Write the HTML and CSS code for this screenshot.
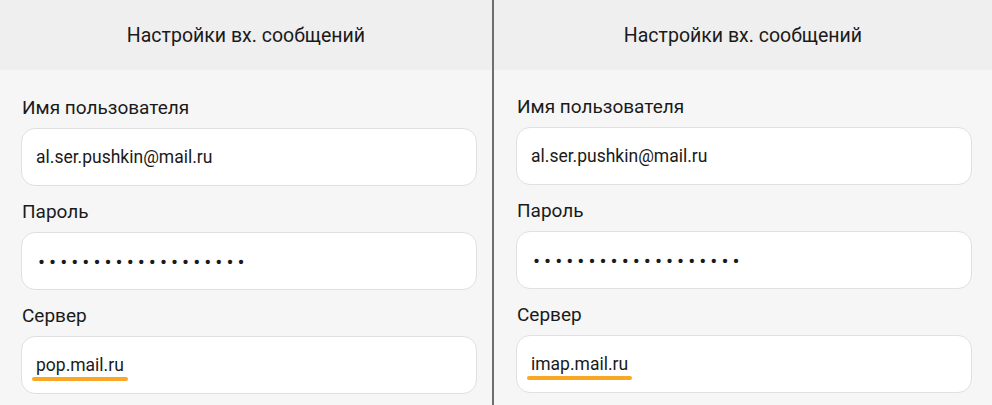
FILE: index.html
```html
<!DOCTYPE html>
<html lang="ru">
	<head>
		<meta charset="UTF-8">
		<link rel="stylesheet" href="styles.css">
	</head>
	<body>
		<div class="screens">

			<div class="panel panel-left">
				<div class="header">Настройки вх. сообщений</div>
				<div class="form">
					<div class="field">
						<p class="label">Имя пользователя</p>
						<div class="input">al.ser.pushkin@mail.ru</div>
					</div>
					<div class="field">
						<p class="label">Пароль</p>
						<div class="input password">•••••••••••••••••••</div>
					</div>
					<div class="field">
						<p class="label">Сервер</p>
						<div class="input"><span class="mark">pop.mail.ru</span></div>
					</div>
				</div>
			</div>

			<div class="divider"></div>

			<div class="panel panel-right">
				<div class="header">Настройки вх. сообщений</div>
				<div class="form">
					<div class="field">
						<p class="label">Имя пользователя</p>
						<div class="input">al.ser.pushkin@mail.ru</div>
					</div>
					<div class="field">
						<p class="label">Пароль</p>
						<div class="input password">•••••••••••••••••••</div>
					</div>
					<div class="field">
						<p class="label">Сервер</p>
						<div class="input"><span class="mark">imap.mail.ru</span></div>
					</div>
				</div>
			</div>

		</div>
	</body>
</html>
```

FILE: styles.css
```css
body, p {
	margin: 0;
	padding: 0;
}

body {
	font-family: Roboto, "Noto Sans", sans-serif;
	color: #1a1a1a;
	background: #f6f6f6;
	overflow: hidden;
}

/* two phone screens side by side */

.screens {
	display: flex;
	height: 405px;
}

.panel {
	background: #f6f6f6;
}

.panel-left {
	width: 492px;
}

.panel-right {
	flex: 1;
}

.divider {
	width: 2px;
	background: #6e6e6e;
}

.header {
	height: 70px;
	display: flex;
	align-items: center;
	justify-content: center;
	background: #efefef;
	font-size: 19.5px;
}

.form {
	display: flex;
	flex-direction: column;
	gap: 14px;
	padding-top: 26px;
}

.panel-left .form {
	padding-left: 21px;
	padding-right: 15px;
}

.panel-right .form {
	padding-top: 25px;
	padding-left: 22px;
	padding-right: 20px;
}

.label {
	height: 24px;
	line-height: 24px;
	font-size: 19px;
	padding-left: 1px;
	margin-bottom: 8px;
}

.input {
	height: 56px;
	display: flex;
	align-items: center;
	padding-left: 14px;
	background: #ffffff;
	border: 1px solid #e0e0e0;
	border-radius: 14px;
	font-size: 17.5px;
}

.password {
	font-size: 21px;
	letter-spacing: 4px;
	padding-left: 16px;
	padding-top: 2px;
	height: 54px;
}

/* orange marker under the server name */

.mark {
	position: relative;
}

.mark::after {
	content: "";
	position: absolute;
	left: -4px;
	right: -4px;
	bottom: -6px;
	height: 4px;
	border-radius: 2px;
	background: #f9a825;
}
```
